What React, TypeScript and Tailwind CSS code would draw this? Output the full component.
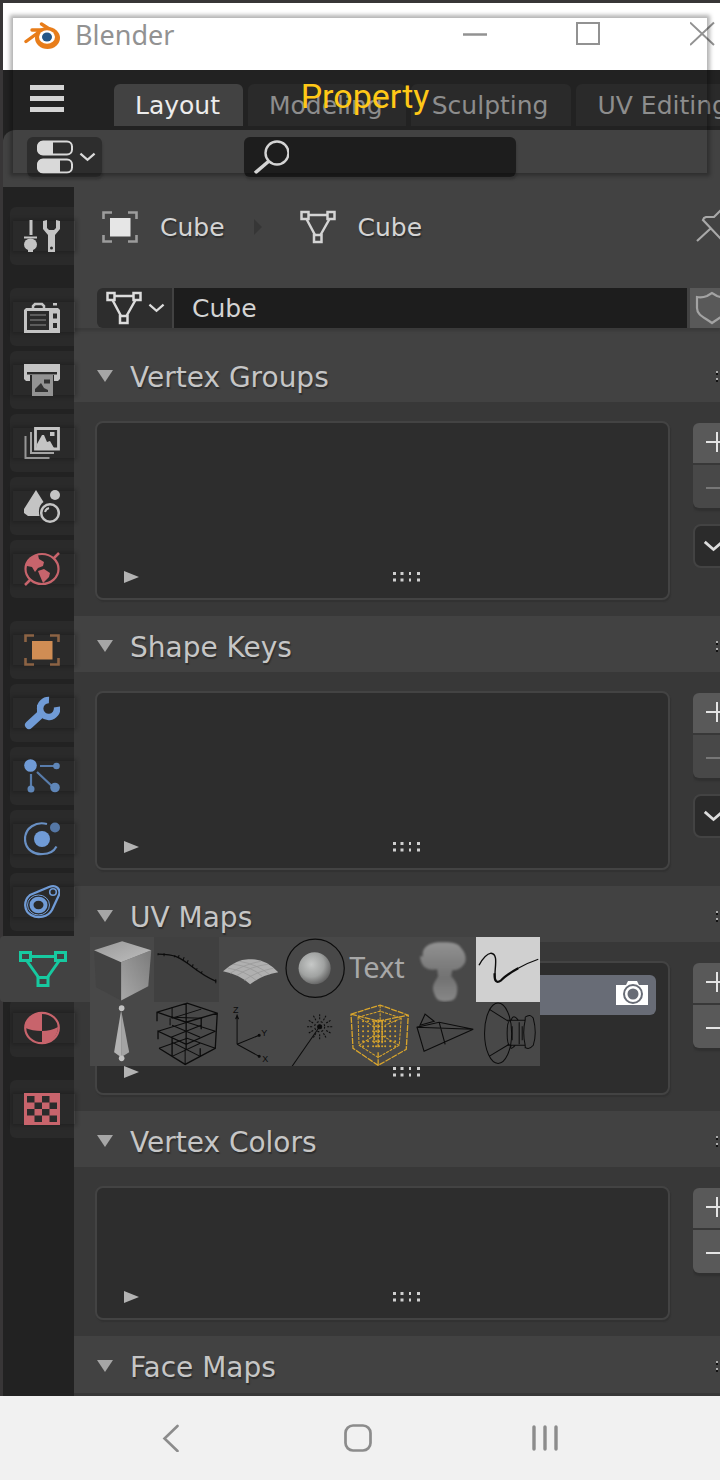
import type { ReactNode } from 'react';

/* ---------- shared icons ---------- */

function MeshIcon({ className }: { className: string }) {
  return (
    <svg viewBox="0 0 36 34" className={className} fill="none" stroke="currentColor" strokeWidth="2.5" aria-hidden="true">
      <rect x="1.5" y="2" width="7" height="7" />
      <rect x="27.5" y="2" width="7" height="7" />
      <rect x="14" y="25" width="7.5" height="7" />
      <path d="M8.5 5H27.5M6.5 9L15 25M29.5 9L20.5 25" />
    </svg>
  );
}

function ActiveMeshIcon() {
  return (
    <svg viewBox="0 0 48 36" className="h-9 w-12" fill="none" stroke="currentColor" strokeWidth="3" aria-hidden="true">
      <rect x="1.5" y="1.5" width="10" height="8" />
      <rect x="36.500" y="1.5" width="10" height="8" />
      <rect x="19" y="26.500" width="10" height="8" />
      <path d="M11.500 5.500H36.500M8 10L20 27M40 10L28 27" />
    </svg>
  );
}

function ChevronDown({ className }: { className: string }) {
  return (
    <svg viewBox="0 0 18 12" className={className} fill="none" stroke="currentColor" strokeWidth="2.4" aria-hidden="true">
      <path d="M1.5 2.5L9 9L16.5 2.5" />
    </svg>
  );
}

function ObjectIcon({ className, frame }: { className: string; frame: string }) {
  return (
    <svg viewBox="0 0 36 36" className={className} aria-hidden="true">
      <path
        d="M1.5 10V3.5H10M26 3.5H34.5V10M34.5 26V32.5H26M10 32.5H1.5V26"
        fill="none"
        stroke={frame}
        strokeWidth="2.6"
      />
      <rect x="8" y="9" width="20.5" height="18.5" fill="currentColor" />
    </svg>
  );
}

function BlenderLogo() {
  return (
    <svg viewBox="0 0 36 28" className="h-7 w-9" aria-hidden="true">
      <path d="M17.500 2L30 10M8 8H25M2 19.500L15 10" fill="none" stroke="#e87d1a" strokeWidth="3.4" strokeLinecap="round" />
      <ellipse cx="23.500" cy="16" rx="12.500" ry="11" fill="#e87d1a" />
      <ellipse cx="23" cy="15" rx="8" ry="6.8" fill="#fff" />
      <ellipse cx="23" cy="15" rx="5" ry="4.6" fill="#265787" />
    </svg>
  );
}

/* ---------- property tab icons ---------- */

const sidebarSvg = 'h-9 w-9';

const toolIcon = (
  <svg viewBox="0 0 36 36" className={sidebarSvg} fill="currentColor" aria-hidden="true">
    <path d="M5.500 2h3v15h-3zM0 18.500h13v2H0z" />
    <ellipse cx="6.500" cy="26.500" rx="6.500" ry="6" />
    <path d="M4 28h5v6H4z" />
    <path d="M19 3l4-1v8l2 2h5l2-2V2l4 1v8l-5 6v17h-7V17l-5-6z" />
    <circle cx="27.500" cy="30" r="1.500" fill="#2b2b2b" />
  </svg>
);

const renderIcon = (
  <svg viewBox="0 0 36 36" className={sidebarSvg} aria-hidden="true">
    <path d="M9 10V7l2-2h7l2 2v3" fill="none" stroke="currentColor" strokeWidth="2.500" />
    <path d="M29 4h4v2.500h-4z" fill="currentColor" />
    <path d="M0 11l2-2h32l2 2v23H0z" fill="currentColor" />
    <path d="M3 12h22v19H3zM29 14.500h4v5h-4zM29 24h4v5h-4z" fill="#2b2b2b" />
    <path d="M6 16h16M6 21h16M6 26h16" stroke="#5c5c5c" strokeWidth="2" />
  </svg>
);

const outputIcon = (
  <svg viewBox="0 0 36 36" className={sidebarSvg} aria-hidden="true">
    <path d="M0 2h36v15l-2 2h-4v-6H6v6H2l-2-2z" fill="currentColor" />
    <path d="M3 10h30v2.500H3z" fill="#2b2b2b" />
    <path d="M8 13h21v21H8z" fill="#939393" />
    <path d="M20 17.500h6v4h-6zM11 30v-3l6-6 3 5 4 2v2z" fill="#333" />
  </svg>
);

const viewLayerIcon = (
  <svg viewBox="0 0 36 36" className={sidebarSvg} aria-hidden="true">
    <path d="M11.500 3.500h23v20.500h-23z" fill="none" stroke="currentColor" strokeWidth="2.800" />
    <path d="M13 24v-5l5-9h2l3 7 3-1 4 7v1zM26 7h4.500v4H26z" fill="currentColor" />
    <path d="M7 7v21h23" fill="none" stroke="currentColor" strokeWidth="2" opacity=".8" />
    <path d="M1.500 11v22h24" fill="none" stroke="currentColor" strokeWidth="2" opacity=".7" />
  </svg>
);

const sceneIcon = (
  <svg viewBox="0 0 36 36" className={sidebarSvg} aria-hidden="true">
    <path d="M12 2l7.500 12c-4 3-5.500 8-4 14H4L0 25v-4z" fill="currentColor" />
    <circle cx="31" cy="7" r="5" fill="currentColor" />
    <circle cx="26" cy="25" r="8.800" fill="none" stroke="currentColor" strokeWidth="2.500" />
    <path d="M21 24c.5-2 2-3.500 4-4" fill="none" stroke="currentColor" strokeWidth="2" />
  </svg>
);

const worldIcon = (
  <svg viewBox="0 0 36 36" className={sidebarSvg} aria-hidden="true">
    <ellipse cx="18" cy="18" rx="16.500" ry="15" fill="none" stroke="currentColor" strokeWidth="2.200" />
    <path d="M1 34l5-5M35 2l-5 5" stroke="currentColor" strokeWidth="2.500" />
    <path d="M3 12l6-7 5-1 1 4 5 3-1 4-5 2-3 4-3-5-5-1zM14 20l6-2 6 4-1 4-6 6-3-7z" fill="currentColor" />
  </svg>
);

const modifierIcon = (
  <svg viewBox="0 0 36 36" className={sidebarSvg} fill="none" stroke="currentColor" aria-hidden="true">
    <path d="M5 30L17 19" strokeWidth="8" strokeLinecap="round" />
    <path d="M25 5A8.500 8.500 0 1 0 33 12" strokeWidth="6.500" />
    <path d="M14 10v10l6 2z" fill="currentColor" strokeWidth="2" />
  </svg>
);

const particlesIcon = (
  <svg viewBox="0 0 36 36" className={sidebarSvg} aria-hidden="true">
    <path d="M16 8h16M7 16v15M13 14l17 16" stroke="#587cab" strokeWidth="2.200" />
    <circle cx="6.500" cy="7.500" r="6.300" fill="currentColor" />
    <circle cx="32.500" cy="8" r="3.300" fill="#5f86b8" />
    <circle cx="7" cy="31" r="3.500" fill="#5f86b8" />
    <circle cx="31" cy="29.500" r="4.800" fill="#5f86b8" />
  </svg>
);

const physicsIcon = (
  <svg viewBox="0 0 36 36" className={sidebarSvg} aria-hidden="true">
    <circle cx="18" cy="18" r="8" fill="currentColor" />
    <path d="M23 3C12 0 1 7 1 18s10 16 18 15c6 0 11-3 13.500-7.500" fill="none" stroke="#6990c4" strokeWidth="2.200" />
    <circle cx="31" cy="6.500" r="5" fill="#5577a5" />
  </svg>
);

const constraintsIcon = (
  <svg viewBox="0 0 36 36" className={sidebarSvg} fill="none" stroke="currentColor" aria-hidden="true">
    <path d="M6 11L25 3c7-3 12 2 10 8l-7 15c-4 7-14 9-21 5s-8-14-1-20z" strokeWidth="2.300" />
    <ellipse cx="14.500" cy="21" rx="7" ry="6.300" strokeWidth="4" />
    <ellipse cx="14.500" cy="21" rx="11" ry="10" strokeWidth="1" />
    <circle cx="29" cy="8" r="3.300" strokeWidth="1.600" />
  </svg>
);

const materialIcon = (
  <svg viewBox="0 0 36 36" className={sidebarSvg} aria-hidden="true">
    <ellipse cx="18" cy="18" rx="16.800" ry="15.200" fill="none" stroke="currentColor" strokeWidth="2.200" />
    <path d="M18 2.500V21Q8 21 1.500 18C1.500 9 9 2.500 18 2.500z" fill="currentColor" />
    <path d="M18 21q9 0 16-4c0 9-7 16-16 16.500z" fill="currentColor" />
  </svg>
);

const textureIcon = (
  <svg viewBox="0 0 36 32" className="h-8 w-9" aria-hidden="true">
    <path d="M0 0h36v32H0z" fill="currentColor" />
    <path
      d="M3 3h7.500v6.500H3zM18 3h7.500v6.500H18zM10.500 9.500H18V16h-7.500zM25.500 9.500H33V16h-7.500zM3 16h7.500v6.500H3zM18 16h7.500v6.500H18zM10.500 22.500H18V29h-7.500zM25.500 22.500H33V29h-7.500z"
      fill="#2b2b2b"
    />
  </svg>
);

type Tab = { name: string; color: string; icon: ReactNode };

const tabGroups: Tab[][] = [
  [{ name: 'Tool', color: 'text-[#c4c4c4]', icon: toolIcon }],
  [
    { name: 'Render', color: 'text-[#c4c4c4]', icon: renderIcon },
    { name: 'Output', color: 'text-[#c4c4c4]', icon: outputIcon },
    { name: 'View Layer', color: 'text-[#c4c4c4]', icon: viewLayerIcon },
    { name: 'Scene', color: 'text-[#c4c4c4]', icon: sceneIcon },
    { name: 'World', color: 'text-[#c8646c]', icon: worldIcon },
  ],
  [
    { name: 'Object', color: 'text-[#d08d54]', icon: <ObjectIcon className={sidebarSvg} frame="#8c6344" /> },
    { name: 'Modifiers', color: 'text-[#709bd6]', icon: modifierIcon },
    { name: 'Particles', color: 'text-[#709bd6]', icon: particlesIcon },
    { name: 'Physics', color: 'text-[#709bd6]', icon: physicsIcon },
    { name: 'Constraints', color: 'text-[#709bd6]', icon: constraintsIcon },
    { name: 'Object Data', color: 'text-[#17c9a0]', icon: null },
    { name: 'Material', color: 'text-[#c8646c]', icon: materialIcon },
  ],
  [{ name: 'Texture', color: 'text-[#c8646c]', icon: textureIcon }],
];

/* ---------- object type previews ---------- */

function Preview({ children }: { children: ReactNode }) {
  return (
    <svg viewBox="0 0 64 64" className="h-full w-full" fill="none" stroke="#0c0c0c" strokeWidth="1" aria-hidden="true">
      {children}
    </svg>
  );
}

const rays = [0, 30, 60, 90, 120, 150, 180, 210, 240, 270, 300, 330];
const probeRows = [19, 24, 29, 34, 39, 44];
const probeCols = [16, 21, 26, 29, 32, 35, 38, 43, 48];

const previews: { name: string; cell: string; art: ReactNode }[] = [
  {
    name: 'Mesh',
    cell: '',
    art: (
      <Preview>
        <defs>
          <linearGradient id="cubeTop" x1="0" y1="0" x2="1" y2="1">
            <stop offset="0" stopColor="#9a9a9a" />
            <stop offset="1" stopColor="#bdbdbd" />
          </linearGradient>
          <linearGradient id="cubeSide" x1="0" y1="1" x2="1" y2="0">
            <stop offset="0" stopColor="#a8a8a8" />
            <stop offset="1" stopColor="#7b7b7b" />
          </linearGradient>
        </defs>
        <path d="M4 13L31 25V63L6 50z" fill="#434343" stroke="none" />
        <path d="M61 13L31 25V63L58 49z" fill="url(#cubeSide)" stroke="none" />
        <path d="M4 13L32 4L61 13L31 25z" fill="url(#cubeTop)" stroke="none" />
      </Preview>
    ),
  },
  {
    name: 'Curve',
    cell: 'bg-[#404040]',
    art: (
      <Preview>
        <path d="M4 17C22 17 27 21 36 28S52 40 62 44" strokeWidth="1.300" />
        <path d="M4 16v2M10 16v3M21 18l-1 2M25 18l-1 3M30 20l-1 3M34 23l-1 3M39 27l-1 3M43 31l-1 2M48 34l-1 2M61.500 42v4" />
      </Preview>
    ),
  },
  {
    name: 'Surface',
    cell: '',
    art: (
      <Preview>
        <path d="M4 34Q18 21 31 22Q46 21 59 35Q42 38 31 47Q20 37 4 34z" fill="#b0b0b0" stroke="none" />
        <path d="M9 31Q25 33 37 43M14 27Q32 29 43 39M20 24Q38 27 50 37M54 31Q38 34 25 43M49 27Q32 29 18 38M42 24Q25 27 11 36" stroke="#9a9a9a" strokeWidth=".8" />
      </Preview>
    ),
  },
  {
    name: 'Metaball',
    cell: '',
    art: (
      <Preview>
        <defs>
          <radialGradient id="ball" cx=".4" cy=".38" r=".65">
            <stop offset="0" stopColor="#c6c8c7" />
            <stop offset=".6" stopColor="#a0a2a1" />
            <stop offset="1" stopColor="#626262" />
          </radialGradient>
        </defs>
        <circle cx="32" cy="31" r="29" strokeWidth="1.200" />
        <circle cx="31.500" cy="31" r="16" fill="url(#ball)" stroke="none" />
      </Preview>
    ),
  },
  {
    name: 'Text',
    cell: '',
    art: <span className="block h-full pl-[2px] font-['Noto_Sans',sans-serif] text-[29px] leading-[60px] text-[#a8a8a8]">Text</span>,
  },
  {
    name: 'Volume',
    cell: '',
    art: (
      <Preview>
        <defs>
          <linearGradient id="cloud" x1="0" y1="0" x2="0" y2="1">
            <stop offset="0" stopColor="#929292" />
            <stop offset=".6" stopColor="#727272" />
            <stop offset="1" stopColor="#888" />
          </linearGradient>
          <filter id="soft">
            <feGaussianBlur stdDeviation="1.200" />
          </filter>
        </defs>
        <path
          d="M12 19C10 10 19 5 29 5s18 0 21 6c5 5 6 13 2 17-3 4-7 5-11 5l-1 6c4 4 7 9 6 15-1 9-5 10-13 10s-9-5-11-11c-1-6 3-10 5-14l-1-7c-6 1-16 1-17-13z"
          fill="url(#cloud)"
          stroke="none"
          filter="url(#soft)"
        />
      </Preview>
    ),
  },
  {
    name: 'Grease Pencil',
    cell: 'bg-[#d0d0d0]',
    art: (
      <Preview>
        <path d="M3 28Q9 17 15 16C23 17 18 31 19 41" strokeWidth="1.400" />
        <path d="M18.500 36Q18 48 25 43Q31 37 42 31" strokeWidth="2.200" />
        <path d="M40 32Q50 26 62 22" strokeWidth="1.200" />
      </Preview>
    ),
  },
  {
    name: 'Armature',
    cell: '',
    art: (
      <Preview>
        <path d="M31 8L24 50L31 55z" fill="#b2b2b2" stroke="none" />
        <path d="M31 8L39 50L31 55z" fill="#a4a4a4" stroke="none" />
        <circle cx="31.500" cy="6" r="2.800" fill="#c2c2c2" stroke="none" />
        <circle cx="31.500" cy="56" r="2.800" fill="#c2c2c2" stroke="none" />
      </Preview>
    ),
  },
  {
    name: 'Lattice',
    cell: '',
    art: (
      <Preview>
        <path d="M3 19V10L33 1L63 11L61 46L31 62L5 46M3 10L32 20L63 11M32 1V47M4 37V29L32 42L61 29M18 36V54M47 15V27M46 46V54" strokeWidth="1.300" />
        <path d="M18 5V16L47 7M48 16L17 15M5 46L33 36L61 46M4 29L33 20L61 29M31 47V62M18 54L46 41M46 54L18 40M17 35L47 23M18 23L46 35M16 16V23" />
      </Preview>
    ),
  },
  {
    name: 'Empty',
    cell: '',
    art: (
      <Preview>
        <path d="M18 42V14M18 42L40 33M18 42L40 54M16.500 17L18 13L19.500 17" />
        <circle cx="40" cy="33" r="1" fill="#0c0c0c" />
        <circle cx="40" cy="54" r="1" fill="#0c0c0c" />
        <g fill="#0c0c0c" stroke="none" fontSize="9" fontFamily="Liberation Sans, sans-serif">
          <text x="14" y="11">Z</text>
          <text x="42" y="34">Y</text>
          <text x="43" y="60">X</text>
        </g>
      </Preview>
    ),
  },
  {
    name: 'Light',
    cell: '',
    art: (
      <Preview>
        <circle cx="36.500" cy="24.500" r="2" fill="#0c0c0c" />
        <circle cx="36.500" cy="24.500" r="5" strokeDasharray="2 2" />
        {rays.map((a) => (
          <path key={a} d="M44 24.500H50" strokeDasharray="2 1" transform={`rotate(${a} 36.500 24.500)`} />
        ))}
        <path d="M36 25L9 64" />
      </Preview>
    ),
  },
  {
    name: 'Light Probe',
    cell: '',
    art: (
      <Preview>
        <g stroke="#d9a52c">
          <path d="M4 12L33 3L61 13L59 47L31 63L6 46zM4 12L31 19L61 13M31 50V63" strokeWidth="1.300" strokeDasharray="6 1" />
          <path d="M11 15L33 9L54 16L52 43L31 55L12 43zM33 3V20M12 43L26 34M52 43L36 34M11 15L25 23M54 16L38 23" strokeDasharray="3 1" />
          <path d="M27 19V41M31 17V45M35 19V41" strokeWidth="1.500" strokeDasharray="4 1" />
        </g>
        <g fill="#d9a52c" stroke="none">
          {probeRows.map((y) => probeCols.map((x) => <circle key={`${x}-${y}`} cx={x} cy={y} r="1" />))}
        </g>
      </Preview>
    ),
  },
  {
    name: 'Camera',
    cell: '',
    art: (
      <Preview>
        <path d="M6 25L28 20L62 27L6 25L13 49L62 27M28 20L34 42M9 23L14 12L23 19z" strokeWidth="1.100" />
      </Preview>
    ),
  },
  {
    name: 'Speaker',
    cell: '',
    art: (
      <Preview>
        <ellipse cx="22" cy="31" rx="13.500" ry="30" />
        <path d="M13 7L32 19M13 54L33 42" />
        <path d="M34 18Q31 19 31 31T34 43M49 18Q46 30 49 43M31 18H49M31 43H49" />
        <path d="M49 15Q54 11 57 16Q61 31 57 43Q53 48 49 45M49 15V18M49 43V46" />
        <path d="M36 24V38M43 20V42M46 24V38M35 18Q37 11 42 18M35 43q-2 6 4 0" />
      </Preview>
    ),
  },
];

function ObjectTypePalette() {
  return (
    <div className="absolute top-px left-full grid h-[129px] w-[450px] grid-cols-7 grid-rows-2 bg-[#484848]">
      {previews.map((p) => (
        <button key={p.name} type="button" aria-label={p.name} className={`overflow-hidden text-left ${p.cell}`}>
          {p.art}
        </button>
      ))}
    </div>
  );
}

/* ---------- sidebar ---------- */

function Sidebar() {
  return (
    <nav aria-label="Property tabs" className="relative z-10 flex w-[71px] shrink-0 flex-col gap-[23px] bg-[#222] pt-5 pl-[7px]">
      {tabGroups.map((group) => (
        <div key={group[0].name} className="flex flex-col gap-[5px]">
          {group.map((tab) =>
            tab.icon === null ? (
              <div key={tab.name} className="relative z-10 -mr-4 -mb-2 -ml-[10px]">
                <button
                  type="button"
                  aria-label={tab.name}
                  className={`flex h-[66px] w-full items-center justify-center rounded-l bg-[#424242] pr-1 ${tab.color}`}
                >
                  <ActiveMeshIcon />
                </button>
                <ObjectTypePalette />
              </div>
            ) : (
              <button
                key={tab.name}
                type="button"
                aria-label={tab.name}
                className={`relative flex h-[58px] items-center justify-center rounded-l-md bg-[#2a2a2a] before:absolute before:inset-x-[3px] before:inset-y-[14px] before:-right-px before:shadow-[0_0_4px_2px_rgba(0,0,0,0.2)] ${tab.color}`}
              >
                <span className="relative">{tab.icon}</span>
              </button>
            ),
          )}
        </div>
      ))}
    </nav>
  );
}

/* ---------- panels ---------- */

function Grip() {
  return (
    <svg viewBox="0 0 28 10" className="h-[10px] w-7" fill="#cfcfcf" aria-hidden="true">
      <path d="M0 0h3v3H0zM7.500 0h3v3h-3zM16 0h2v3h-2zM24 0h3v3h-3zM0 6.500h3v3H0zM7.500 6.500h3v3h-3zM16 6.500h2v3h-2zM24 6.500h3v3h-3z" />
    </svg>
  );
}

function Panel({
  title,
  tall = false,
  removable = false,
  menu = false,
  selected = false,
}: {
  title: string;
  tall?: boolean;
  removable?: boolean;
  menu?: boolean;
  selected?: boolean;
}) {
  return (
    <section className="bg-[#383838]">
      <PanelHeader title={title} />
      <div className="flex gap-[23px] pt-[19px] pb-4 pl-[21px]">
        <div
          className={`flex flex-1 flex-col justify-between rounded-lg border-2 border-[#434343] bg-[#2d2d2d] shadow-[1px_2px_1px_#323232] ${tall ? 'h-[179px]' : 'h-[134px]'}`}
        >
          {selected ? (
            <div className="mx-3 mt-3 flex h-10 items-center justify-end rounded-md bg-[#686c76] pr-2 pb-1">
              <button type="button" aria-label="Active render">
                <svg viewBox="0 0 32 26" className="h-[26px] w-8" aria-hidden="true">
                  <path d="M0 5h10l2-4h9l2 4h9v20H0z" fill="#fff" />
                  <circle cx="17" cy="14" r="9" fill="none" stroke="#686c76" strokeWidth="2" />
                  <circle cx="17" cy="14" r="5.500" fill="#686c76" />
                </svg>
              </button>
            </div>
          ) : (
            <div />
          )}
          <div className="relative flex h-[42px] items-center justify-center pr-1">
            <button type="button" aria-label={`Filter ${title}`} className="absolute left-[26px]">
              <svg viewBox="0 0 16 12" className="h-3 w-4" fill="#b3b3b3" aria-hidden="true">
                <path d="M1 0L16 6L1 12z" />
              </svg>
            </button>
            <div className="pl-[52px]">
              <Grip />
            </div>
          </div>
        </div>
        <div className="w-[27px] overflow-hidden pt-[2px]">
          <div className="flex w-11 flex-col gap-[2px]">
            <button type="button" aria-label={`Add to ${title}`} className="h-10 rounded-t-md bg-[#595959] text-[#e4e4e4]">
              <svg viewBox="0 0 44 40" className="h-10 w-11" fill="none" stroke="currentColor" strokeWidth="2" aria-hidden="true">
                <path d="M13 19H35M24 9V29" />
              </svg>
            </button>
            <button
              type="button"
              aria-label={`Remove from ${title}`}
              className={`h-[43px] rounded-b-md shadow-[0_3px_2px_#303030] ${removable ? 'bg-[#595959] text-[#e4e4e4]' : 'bg-[#484848] text-[#777]'}`}
            >
              <svg viewBox="0 0 44 40" className="h-10 w-11" fill="none" stroke="currentColor" strokeWidth="2" aria-hidden="true">
                <path d="M13 21H35" />
              </svg>
            </button>
          </div>
          {menu && (
            <button
              type="button"
              aria-label={`${title} specials`}
              className="mt-4 flex h-[44px] w-11 items-center rounded-lg border-2 border-[#434343] bg-[#2b2b2b] pl-2 text-[#dcdcdc]"
            >
              <ChevronDown className="h-[14px] w-[21px] shrink-0" />
            </button>
          )}
        </div>
      </div>
    </section>
  );
}

function PanelHeader({ title }: { title: string }) {
  return (
    <h2 className="flex h-14 items-center bg-[#424242] pt-[3px] text-[28px] leading-8 text-[#c6c6c6]">
      <button type="button" className="flex flex-1 items-center pl-[23px] text-left [text-shadow:1px_2px_1px_#2e2e2e]">
        <svg viewBox="0 0 16 12" className="h-3 w-4" fill="#a6a6a6" aria-hidden="true">
          <path d="M0 0H16L8 12z" />
        </svg>
        <span className="pt-1 pl-[17px]">{title}</span>
      </button>
      <svg viewBox="0 0 5 12" className="h-3 w-[5px]" aria-hidden="true">
        <path d="M1 1h2v2H1zM1 8h2v2H1z" fill="#aaa" />
        <path d="M1 3h2v2H1zM1 10h2v2H1z" fill="#111" />
      </svg>
    </h2>
  );
}

/* ---------- page ---------- */

const workspaces = ['Layout', 'Modeling', 'Sculpting', 'UV Editing'];

export default function App() {
  return (
    <div className="flex min-h-screen flex-col overflow-hidden bg-[#222] font-['DejaVu_Sans',sans-serif]">
      <main className="relative flex flex-1 flex-col border-t-[3px] border-l-[3px] border-[#383637]">
        <header className="flex h-[67px] items-start bg-white pl-[21px] text-[#929292]">
          <div className="flex flex-1 items-center gap-[15px] pt-[11px]">
            <div className="pt-[2px]">
              <BlenderLogo />
            </div>
            <span className="font-['Noto_Sans',sans-serif] text-[27px] leading-[42px]">Blender</span>
          </div>
          <div className="flex gap-[88px] pt-[18px] pr-1">
            <button type="button" aria-label="Minimize">
              <svg viewBox="0 0 26 26" className="h-[26px] w-[26px]" stroke="currentColor" strokeWidth="2.500" aria-hidden="true">
                <path d="M1 13.500H25" />
              </svg>
            </button>
            <button type="button" aria-label="Maximize">
              <svg viewBox="0 0 26 26" className="h-[26px] w-[26px]" fill="none" stroke="currentColor" strokeWidth="2" aria-hidden="true">
                <path d="M1 2H23V23H1z" />
              </svg>
            </button>
            <button type="button" aria-label="Close">
              <svg viewBox="0 0 26 26" className="h-[26px] w-[26px]" fill="none" stroke="currentColor" strokeWidth="2" aria-hidden="true">
                <path d="M0 1.500L24 24M24 1.500L0 24" />
              </svg>
            </button>
          </div>
        </header>

        <div className="flex h-[60px] items-start overflow-hidden bg-[#222] pl-[27px]">
          <button type="button" aria-label="Menu" className="mt-[15px] mr-[50px] flex w-[34px] shrink-0 flex-col gap-[6px]">
            <span className="h-[5px] w-full bg-[#d4d4d4]" />
            <span className="h-[5px] w-full bg-[#d4d4d4]" />
            <span className="h-[5px] w-full bg-[#d4d4d4]" />
          </button>
          <div className="mt-[14px] flex gap-[5px] text-[25px] leading-[44px]">
            {workspaces.map((name, i) => (
              <button
                key={name}
                type="button"
                className={`h-[42px] shrink-0 rounded-t-md pr-[23px] pl-[21px] whitespace-nowrap ${i === 0 ? 'bg-[#424242] text-[#ececec]' : 'bg-[#2a2a2a] text-[#8d8d8d]'}`}
              >
                {name}
              </button>
            ))}
          </div>
        </div>

        <div className="flex h-[57px] items-start rounded-tl-xl bg-[#424242] pt-[7px] pl-6">
          <button
            type="button"
            aria-label="Editor type"
            className="mr-[142px] flex h-10 w-[75px] items-center gap-[6px] rounded-md bg-[#2d2d2d] pl-[10px] text-[#d9d9d9] shadow-[1px_3px_2px_#393939]"
          >
            <svg viewBox="0 0 36 34" className="h-[34px] w-9" aria-hidden="true">
              <rect x="1" y="1.500" width="34" height="13" rx="5" fill="#2d2d2d" stroke="currentColor" strokeWidth="2" />
              <path d="M6 1h10v14H6Q0 14 0 8T6 1z" fill="currentColor" />
              <rect x="1" y="19.500" width="34" height="13" rx="5" fill="#2d2d2d" stroke="currentColor" strokeWidth="2" />
              <path d="M6 19h17v14H6q-6-1-6-7t6-7z" fill="currentColor" />
            </svg>
            <ChevronDown className="h-3 w-[17px]" />
          </button>
          <label className="flex h-10 w-[272px] items-center rounded-md bg-[#1d1d1d] pl-[9px] shadow-[1px_3px_2px_#393939]">
            <svg viewBox="0 0 36 34" className="h-[34px] w-9 shrink-0" fill="none" stroke="#d4d4d4" strokeWidth="2.400" aria-hidden="true">
              <circle cx="24" cy="13" r="11.500" />
              <path d="M16 21L2 33" strokeWidth="3.500" />
            </svg>
            <input type="search" aria-label="Search" className="min-w-0 flex-1 bg-transparent text-[25px] text-[#d4d4d4] outline-none" />
          </label>
        </div>

        <div className="flex flex-1">
          <Sidebar />
          <div className="min-w-0 flex-1 border-b-[3px] border-[#383838] bg-[#424242]">
            <div className="flex h-20 items-center overflow-hidden pl-7 text-[25px] leading-8 text-[#d4d4d4]">
              <div className="text-[#e6e6e6]">
                <ObjectIcon className="h-9 w-9" frame="#9c9c9c" />
              </div>
              <span className="pt-[2px] pl-[22px] [text-shadow:1px_2px_1px_#2e2e2e]">Cube</span>
              <svg viewBox="0 0 10 18" className="mx-7 h-[18px] w-[10px]" fill="#363636" aria-hidden="true">
                <path d="M1 1L9 9L1 17z" />
              </svg>
              <MeshIcon className="mr-[22px] ml-[9px] h-[34px] w-9" />
              <span className="flex-1 pt-[2px] [text-shadow:1px_2px_1px_#2e2e2e]">Cube</span>
              <button type="button" aria-label="Pin" className="w-6 shrink-0 overflow-hidden">
                <svg viewBox="0 0 36 36" className="h-9 w-9" fill="none" stroke="#a8a8a8" strokeWidth="2.200" aria-hidden="true">
                  <path d="M1 32L14 20M8 9L10 8H18L24 2L34 12L27 18V26L24 29L7 11z" />
                </svg>
              </button>
            </div>

            <div className="mt-[21px] mb-[18px] flex h-10 gap-[2px] pl-[23px] shadow-[0_3px_2px_#3a3a3a]">
              <button type="button" aria-label="Browse mesh data" className="flex w-[75px] items-center gap-[6px] rounded-l-md bg-[#2d2d2d] pl-[9px] text-[#dcdcdc]">
                <MeshIcon className="h-[34px] w-9" />
                <ChevronDown className="h-3 w-[17px]" />
              </button>
              <input
                type="text"
                aria-label="Mesh name"
                defaultValue="Cube"
                className="min-w-0 flex-1 bg-[#1d1d1d] px-[18px] pt-[2px] text-[25px] text-[#d4d4d4] outline-none"
              />
              <button type="button" aria-label="Fake user" className="ml-px w-[30px] overflow-hidden bg-[#595959] pl-[5px]">
                <svg viewBox="0 0 36 36" className="h-9 w-9" fill="none" stroke="#a3a3a3" strokeWidth="2.200" aria-hidden="true">
                  <path d="M17 3L12 6Q7 8 2 7V18C2 25 9 27 17 33C25 27 32 25 32 18V7Q27 8 22 6z" />
                </svg>
              </button>
            </div>

            <Panel title="Vertex Groups" tall menu />
            <Panel title="Shape Keys" tall menu />
            <Panel title="UV Maps" removable selected />
            <Panel title="Vertex Colors" removable />
            <PanelHeader title="Face Maps" />
          </div>
        </div>

        <div className="pointer-events-none absolute top-[15px] right-[13px] left-[10px] z-20 h-[155px] shadow-[0_0_4px_3px_rgba(0,0,0,0.3)]" />
        <p className="pointer-events-none absolute inset-x-0 top-[72px] z-30 pl-[7px] text-center font-['Roboto',sans-serif] text-[34px] leading-[42px] text-[#ffc817]">
          Property
        </p>
      </main>

      <footer className="flex h-[84px] items-center bg-[#f1f1f1] pr-[81px] pl-[77px] text-[#8c8c8c]">
        <button type="button" aria-label="Back" className="flex flex-1 justify-center">
          <svg viewBox="0 0 28 28" className="h-7 w-7" fill="none" stroke="currentColor" strokeWidth="2.600" strokeLinecap="round" aria-hidden="true">
            <path d="M20.500 2L7.500 14.500L20.500 27" />
          </svg>
        </button>
        <button type="button" aria-label="Home" className="flex flex-1 justify-center">
          <svg viewBox="0 0 28 28" className="h-7 w-7" fill="none" stroke="currentColor" strokeWidth="2.700" aria-hidden="true">
            <rect x="1.500" y="1.500" width="25" height="25" rx="7.500" />
          </svg>
        </button>
        <button type="button" aria-label="Recents" className="flex flex-1 justify-center">
          <svg viewBox="0 0 28 28" className="h-7 w-7" fill="none" stroke="currentColor" strokeWidth="3.400" strokeLinecap="round" aria-hidden="true">
            <path d="M3 3V25M14 3V25M25 3V25" />
          </svg>
        </button>
      </footer>
    </div>
  );
}
